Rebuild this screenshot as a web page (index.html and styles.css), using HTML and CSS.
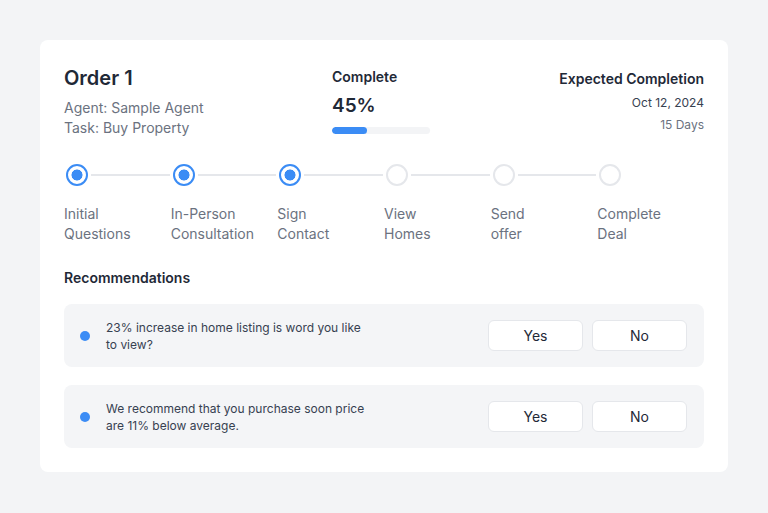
FILE: index.html
```html
<!DOCTYPE html>
<html>
<head>
<meta charset="utf-8">
<link rel="stylesheet" href="styles.css">
</head>
<body>
<div class="card">
  <div class="header">
    <div class="order">
      <div class="title">Order 1</div>
      <div class="meta">Agent: Sample Agent</div>
      <div class="meta">Task: Buy Property</div>
    </div>
    <div class="progress">
      <div class="label">Complete</div>
      <div class="pct">45%</div>
      <div class="bar"><div class="fill"></div></div>
    </div>
    <div class="expected">
      <div class="label exp-label">Expected Completion</div>
      <div class="date">Oct 12, 2024</div>
      <div class="days">15 Days</div>
    </div>
  </div>

  <div class="stepper">
    <div class="step done"><div class="track"><span class="dot"></span><span class="line"></span></div><div class="step-label">Initial<br>Questions</div></div>
    <div class="step done"><div class="track"><span class="dot"></span><span class="line"></span></div><div class="step-label">In-Person<br>Consultation</div></div>
    <div class="step done"><div class="track"><span class="dot"></span><span class="line"></span></div><div class="step-label">Sign<br>Contact</div></div>
    <div class="step"><div class="track"><span class="dot"></span><span class="line"></span></div><div class="step-label">View<br>Homes</div></div>
    <div class="step"><div class="track"><span class="dot"></span><span class="line"></span></div><div class="step-label">Send<br>offer</div></div>
    <div class="step"><div class="track"><span class="dot"></span></div><div class="step-label">Complete<br>Deal</div></div>
  </div>

  <div class="rec-title">Recommendations</div>
  <div class="recs">
    <div class="rec">
      <span class="bullet"></span>
      <div class="rec-text">23% increase in home listing is word you like to view?</div>
      <div class="actions"><button class="btn">Yes</button><button class="btn">No</button></div>
    </div>
    <div class="rec">
      <span class="bullet"></span>
      <div class="rec-text">We recommend that you purchase soon price are 11% below average.</div>
      <div class="actions"><button class="btn">Yes</button><button class="btn">No</button></div>
    </div>
  </div>
</div>
</body>
</html>
```
FILE: styles.css
```css
* { box-sizing: border-box; }
html, body { margin: 0; padding: 0; }
body {
  background: #f3f4f6;
  font-family: Inter, "Noto Sans", sans-serif;
  color: #1f2937;
  padding: 40px;
  height: 513px;
}
.card {
  background: #fff;
  border-radius: 8px;
  padding: 24px;
  width: 688px;
}
.header {
  display: flex;
  align-items: flex-start;
}
.order { width: 268px; }
.title {
  font-size: 20px;
  line-height: 28px;
  font-weight: 600;
  color: #1f2937;
}
.meta {
  font-size: 14px;
  line-height: 20px;
  color: #6b7280;
}
.title + .meta { margin-top: 6px; }
.progress { width: 120px; padding-top: 3px; }
.label {
  font-size: 14px;
  line-height: 20px;
  font-weight: 600;
  color: #1f2937;
}
.pct {
  font-size: 19px;
  line-height: 28px;
  font-weight: 600;
  margin-top: 5px;
  color: #1f2937;
}
.bar {
  margin-top: 7px;
  width: 98px;
  height: 7px;
  border-radius: 4px;
  background: #f3f4f6;
  overflow: hidden;
}
.fill { width: 35px; height: 100%; background: #3b8cf5; border-radius: 4px; }
.expected {
  margin-left: auto;
  text-align: right;
  padding-top: 5px;
}
.date {
  font-size: 12px;
  line-height: 18px;
  color: #374151;
  margin-top: 5px;
}
.days {
  font-size: 12px;
  line-height: 18px;
  color: #6b7280;
  margin-top: 4px;
}
.stepper {
  display: grid;
  grid-template-columns: repeat(6, 1fr);
  margin-top: 26px;
}
.track {
  display: flex;
  align-items: center;
  height: 22px;
}
.dot {
  width: 22px;
  height: 22px;
  margin-left: 2px;
  border-radius: 50%;
  border: 2px solid #e5e7eb;
  background: #fff;
  flex: none;
}
.done .dot {
  border: 2.5px solid #3b8cf5;
  background: radial-gradient(circle, #3b8cf5 0 5.2px, #fff 5.8px);
}
.line {
  flex: 1;
  height: 2px;
  background: #e5e7eb;
  margin: 0 1px 0 3px;
}
.step-label {
  margin-top: 18px;
  font-size: 14px;
  line-height: 20px;
  color: #6b7280;
}
.rec-title {
  margin-top: 24px;
  font-size: 14px;
  line-height: 20px;
  font-weight: 600;
  color: #1f2937;
}
.recs {
  margin-top: 16px;
  display: flex;
  flex-direction: column;
  gap: 18px;
}
.rec {
  display: flex;
  align-items: center;
  height: 63px;
  background: #f4f5f7;
  border-radius: 8px;
  padding: 0 17px 0 16px;
}
.bullet {
  width: 10px;
  height: 10px;
  border-radius: 50%;
  background: #3b8cf5;
  flex: none;
}
.rec-text {
  margin-left: 16px;
  width: 265px;
  font-size: 12px;
  line-height: 17px;
  color: #374151;
}
.actions {
  margin-left: auto;
  display: flex;
  gap: 9px;
}
.btn {
  width: 95px;
  height: 31px;
  background: #fff;
  border: 1px solid #e5e7eb;
  border-radius: 6px;
  font-family: Inter, "Noto Sans", sans-serif;
  font-size: 14px;
  color: #1f2937;
  padding: 0;
}
```
